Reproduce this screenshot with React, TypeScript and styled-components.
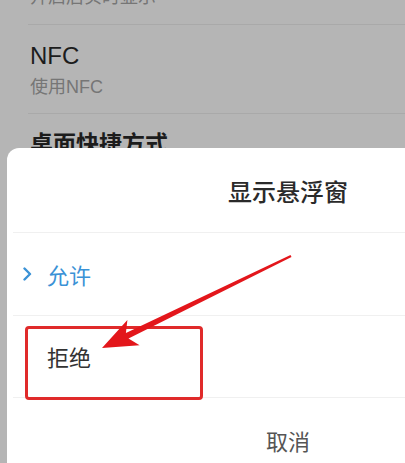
import React from "react";
import styled, { createGlobalStyle } from "styled-components";

const GlobalStyle = createGlobalStyle`
  html, body {
    margin: 0;
    padding: 0;
    background: #b5b5b5;
    overflow: hidden;
  }
  body {
    font-family: "Liberation Sans", "Noto Sans CJK SC", sans-serif;
  }
`;

const Screen = styled.div`
  position: relative;
  width: 405px;
  height: 463px;
  overflow: hidden;
  background: #b5b5b5;
`;

const SettingsList = styled.div`
  margin-top: -14px;
`;

const SettingRow = styled.div<{ $cut?: boolean; $last?: boolean }>`
  margin-left: 28px;
  padding: ${(p) => (p.$cut ? "0 0 16px 2px" : p.$last ? "16px 0 15px 2px" : "17px 0 15px 2px")};
  border-bottom: ${(p) => (p.$last ? "none" : "1px solid #a9a9a9")};
`;

const SettingTitle = styled.div<{ $bold?: boolean }>`
  font-size: ${(p) => (p.$bold ? "23px" : "24px")};
  font-weight: ${(p) => (p.$bold ? 700 : 400)};
  line-height: 28px;
  color: #1c1c1c;
`;

const SettingHint = styled.div<{ $gap?: boolean }>`
  margin-top: ${(p) => (p.$gap ? "6px" : "0")};
  font-size: 18px;
  line-height: 22px;
  color: #767676;
`;

const Sheet = styled.div`
  position: absolute;
  top: 148px;
  left: 7px;
  width: 562px;
  bottom: -20px;
  background: #ffffff;
  border-radius: 12px 12px 0 0;
  display: flex;
  flex-direction: column;
`;

const SheetTitle = styled.div`
  height: 85px;
  display: flex;
  align-items: center;
  justify-content: center;
  font-family: "Noto Sans CJK SC", sans-serif;
  font-size: 24px;
  font-weight: 500;
  color: #2a2a2a;
  border-bottom: 1px solid #f0f0f0;
  margin-left: 6px;
  padding-right: 6px;
`;

const Option = styled.div<{ $selected?: boolean }>`
  height: 82px;
  display: flex;
  align-items: center;
  padding-left: 10px;
  margin-left: 6px;
  border-bottom: 1px solid #f0f0f0;
  font-family: "Noto Sans CJK SC", sans-serif;
  font-size: 22px;
  color: ${(p) => (p.$selected ? "#3b92d6" : "#333333")};
`;

const Mark = styled.span`
  width: 24px;
  display: flex;
  align-items: center;
`;

const CancelButton = styled.div`
  height: 86px;
  display: flex;
  align-items: center;
  justify-content: center;
  font-family: "Noto Sans CJK SC", sans-serif;
  font-size: 22px;
  color: #555555;
`;

const Highlight = styled.div`
  position: absolute;
  left: 25px;
  top: 326px;
  width: 178px;
  height: 74px;
  box-sizing: border-box;
  border: 3px solid #e02a2a;
  border-radius: 4px;
`;

const Overlay = styled.svg`
  position: absolute;
  left: 0;
  top: 0;
  pointer-events: none;
`;

const Chevron = () => (
  <svg width="9" height="14" viewBox="0 0 9 14">
    <path
      d="M1.5 1.5 L7 7 L1.5 12.5"
      fill="none"
      stroke="#3b92d6"
      strokeWidth="2.4"
      strokeLinecap="round"
      strokeLinejoin="round"
    />
  </svg>
);

const options = [
  { label: "允许", selected: true },
  { label: "拒绝", selected: false },
];

const App = () => {
  return (
    <Screen>
      <GlobalStyle />
      <SettingsList>
        <SettingRow $cut>
          <SettingHint>开启后实时显示</SettingHint>
        </SettingRow>
        <SettingRow>
          <SettingTitle>NFC</SettingTitle>
          <SettingHint $gap>使用NFC</SettingHint>
        </SettingRow>
        <SettingRow $last>
          <SettingTitle $bold>桌面快捷方式</SettingTitle>
        </SettingRow>
      </SettingsList>

      <Sheet>
        <SheetTitle>显示悬浮窗</SheetTitle>
        {options.map((o) => (
          <Option key={o.label} $selected={o.selected}>
            <Mark>{o.selected && <Chevron />}</Mark>
            {o.label}
          </Option>
        ))}
        <CancelButton>取消</CancelButton>
      </Sheet>

      <Highlight />
      <Overlay width="405" height="463" viewBox="0 0 405 463">
        <polygon
          points="290.5,254.9 125.9,333 127.4,320.1 102,348 139.6,345.3 128.5,338.4 291.5,257.1"
          fill="#e3161b"
        />
      </Overlay>
    </Screen>
  );
};

export default App;
